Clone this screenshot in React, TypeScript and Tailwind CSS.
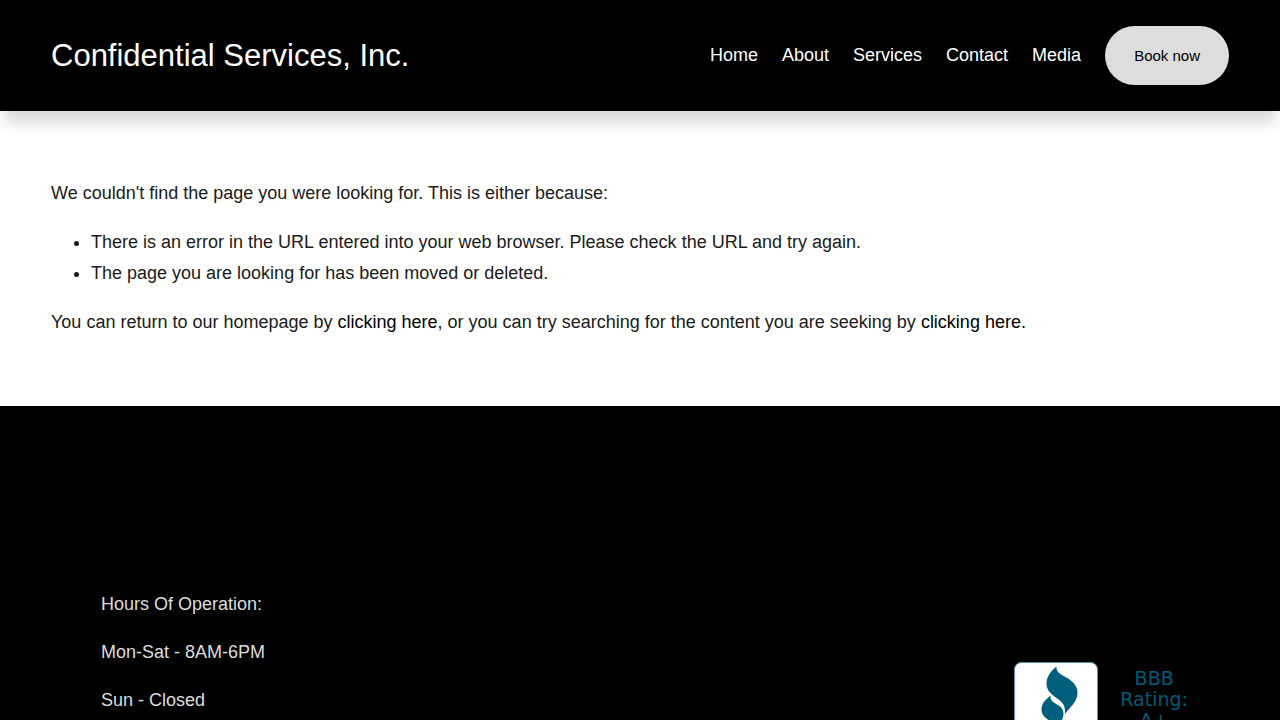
const navItems = ["Home", "About", "Services", "Contact", "Media"];

const hours = ["Hours Of Operation:", "Mon-Sat - 8AM-6PM", "Sun - Closed"];

function SiteHeader() {
  return (
    <header className="relative flex items-center justify-between bg-black px-[51px] py-[26px] text-white shadow-[0_16px_14px_-4px_rgba(0,0,0,0.15)]">
      <a href="#home" className="text-[31px] leading-[40px]">
        Confidential Services, Inc.
      </a>
      <div className="flex items-center gap-6">
        <nav aria-label="Main" className="flex gap-6">
          {navItems.map((item) => (
            <a key={item} href={`#${item.toLowerCase()}`}>
              {item}
            </a>
          ))}
        </nav>
        <button
          type="button"
          className="rounded-full bg-[#dddddd] px-[29px] py-[20px] text-[15px] leading-[19px] text-black"
        >
          Book now
        </button>
      </div>
    </header>
  );
}

function BbbSeal() {
  return (
    <a href="#bbb" className="flex gap-[22px] text-[#005a78]">
      <svg width="84" height="132" viewBox="0 0 84 132" aria-hidden="true">
        <rect x="0.5" y="0.5" width="83" height="131" rx="7" fill="#fff" stroke="#5b94a8" />
        <path
          d="M42.500 4.500C36 10 32.500 15 32.500 21.500C32.500 27.500 36 31 40.500 34.500C47 39 52 42 51 52C55 46 63.500 40 63.500 31C63.500 24 59 20 54 16.500C47 12 42 11 42.500 4.500Z"
          fill="#005f7d"
        />
        <path
          d="M36.500 33.500C32 37.500 27.500 41 27.500 47.500C27.500 54 33 57 37 59.500C41 62 42 64 42 68C45 63 49.500 58 49.500 51.500C49.500 47 46.500 44.500 43 42.500C39 40 36 38.500 36.500 33.500Z"
          fill="#005f7d"
        />
        <path d="M22 72H62L58 78H26Z" fill="#005f7d" />
      </svg>
      <p className="pt-[6px] text-center font-['DejaVu_Sans',sans-serif] text-[19px] leading-[21px]">
        BBB
        <br />
        Rating:
        <br />
        A+
      </p>
    </a>
  );
}

export default function App() {
  return (
    <div className="bg-white font-['Liberation_Sans',Arial,sans-serif] text-[18px] leading-[31px] text-[#1a1a1a]">
      <SiteHeader />
      <main className="flex flex-col gap-[18px] px-[51px] pt-[67px] pb-[68px]">
        <p>We couldn't find the page you were looking for. This is either because:</p>
        <ul className="list-disc pl-10">
          <li>
            There is an error in the URL entered into your web browser. Please check the URL and try again.
          </li>
          <li>The page you are looking for has been moved or deleted.</li>
        </ul>
        <p>
          You can return to our homepage by{" "}
          <a href="#home" className="text-black">
            clicking here
          </a>
          , or you can try searching for the content you are seeking by{" "}
          <a href="#search" className="text-black">
            clicking here.
          </a>
        </p>
      </main>
      <footer className="flex items-start justify-between bg-black pt-[183px] pr-[92px] pb-[80px] pl-[101px] text-[#dddddd]">
        <div className="flex flex-col gap-[17px]">
          {hours.map((line) => (
            <p key={line}>{line}</p>
          ))}
        </div>
        <div className="pt-[73px]">
          <BbbSeal />
        </div>
      </footer>
    </div>
  );
}
